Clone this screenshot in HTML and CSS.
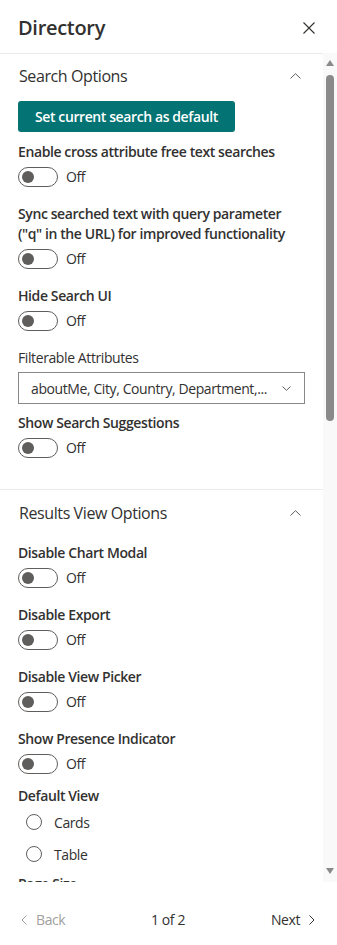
FILE: index.html
```html
<!DOCTYPE html>
<html lang="en">
<head>
<meta charset="utf-8">
<title>Directory</title>
<link rel="stylesheet" href="styles.css">
</head>
<body>
<div class="panel">
  <header class="head">
    <h1 class="title">Directory</h1>
    <button class="close" aria-label="Close">
      <svg width="12" height="12" viewBox="0 0 12 12"><path d="M0.5 0.5 L11.5 11.5 M11.5 0.5 L0.5 11.5" stroke="#323130" stroke-width="1.1" fill="none"/></svg>
    </button>
  </header>
  <div class="body">
    <div class="scroll">
      <section class="group">
        <div class="group-head">
          <span class="group-title">Search Options</span>
          <svg class="chev-up" width="11" height="6" viewBox="0 0 11 6"><path d="M0.5 5.5 L5.5 0.7 L10.5 5.5" stroke="#605e5c" stroke-width="1" fill="none"/></svg>
        </div>
        <div class="group-body">
          <button class="primary">Set current search as default</button>
          <div class="field first">
            <div class="label">Enable cross attribute free text searches</div>
            <div class="toggle-row"><span class="toggle"><span class="knob"></span></span><span class="state">Off</span></div>
          </div>
          <div class="field">
            <div class="label">Sync searched text with query parameter ("q" in the URL) for improved functionality</div>
            <div class="toggle-row"><span class="toggle"><span class="knob"></span></span><span class="state">Off</span></div>
          </div>
          <div class="field">
            <div class="label">Hide Search UI</div>
            <div class="toggle-row"><span class="toggle"><span class="knob"></span></span><span class="state">Off</span></div>
          </div>
          <div class="field">
            <div class="label plain">Filterable Attributes</div>
            <div class="dropdown">
              <span class="dd-text">aboutMe, City, Country, Department,...</span>
              <svg class="dd-chev" width="9" height="5" viewBox="0 0 9 5"><path d="M0.5 0.5 L4.5 4.3 L8.5 0.5" stroke="#605e5c" stroke-width="1" fill="none"/></svg>
            </div>
          </div>
          <div class="field after-dd">
            <div class="label">Show Search Suggestions</div>
            <div class="toggle-row"><span class="toggle"><span class="knob"></span></span><span class="state">Off</span></div>
          </div>
        </div>
      </section>
      <section class="group second">
        <div class="group-head">
          <span class="group-title">Results View Options</span>
          <svg class="chev-up" width="11" height="6" viewBox="0 0 11 6"><path d="M0.5 5.5 L5.5 0.7 L10.5 5.5" stroke="#605e5c" stroke-width="1" fill="none"/></svg>
        </div>
        <div class="group-body">
          <div class="field first2">
            <div class="label">Disable Chart Modal</div>
            <div class="toggle-row"><span class="toggle"><span class="knob"></span></span><span class="state">Off</span></div>
          </div>
          <div class="field">
            <div class="label">Disable Export</div>
            <div class="toggle-row"><span class="toggle"><span class="knob"></span></span><span class="state">Off</span></div>
          </div>
          <div class="field">
            <div class="label">Disable View Picker</div>
            <div class="toggle-row"><span class="toggle"><span class="knob"></span></span><span class="state">Off</span></div>
          </div>
          <div class="field">
            <div class="label">Show Presence Indicator</div>
            <div class="toggle-row"><span class="toggle"><span class="knob"></span></span><span class="state">Off</span></div>
          </div>
          <div class="field tight">
            <div class="label">Default View</div>
            <div class="radios">
              <div class="radio"><span class="circle"></span><span>Cards</span></div>
              <div class="radio"><span class="circle"></span><span>Table</span></div>
            </div>
          </div>
          <div class="field page">
            <div class="label">Page Size</div>
          </div>
        </div>
      </section>
    </div>
    <div class="sbar">
      <span class="arrow up"></span>
      <div class="track"><div class="thumb"></div></div>
      <span class="arrow down"></span>
    </div>
  </div>
  <footer class="foot">
    <span class="back">
      <svg width="6" height="10" viewBox="0 0 6 10"><path d="M5.5 0.5 L1 5 L5.5 9.5" stroke="#a19f9d" stroke-width="1" fill="none"/></svg>
      Back
    </span>
    <span class="pages">1 of 2</span>
    <span class="next">
      Next
      <svg width="6" height="10" viewBox="0 0 6 10"><path d="M0.5 0.5 L5 5 L0.5 9.5" stroke="#323130" stroke-width="1" fill="none"/></svg>
    </span>
  </footer>
</div>
</body>
</html>
```
FILE: styles.css
```css
* { box-sizing: border-box; }
html, body { margin: 0; padding: 0; background: #fff; }
body {
  font-family: "Segoe UI", "Open Sans", "Noto Sans", sans-serif;
  color: #323130;
  font-size: 14px;
  letter-spacing: -0.4px;
}
.panel {
  width: 337px;
  height: 945px;
  display: flex;
  flex-direction: column;
  overflow: hidden;
}
.head {
  height: 53px;
  flex: none;
  display: flex;
  align-items: center;
  justify-content: space-between;
  padding: 3px 22px 0 18px;
}
.title {
  margin: 0;
  font-size: 20px;
  font-weight: 600;
  line-height: 28px;
  letter-spacing: -0.3px;
}
.close {
  border: 0;
  background: none;
  padding: 0;
  width: 12px;
  height: 12px;
  display: flex;
}
.body {
  flex: 1;
  display: flex;
  min-height: 0;
}
.scroll {
  flex: 1;
  overflow: hidden;
  border-top: 1px solid #edebe9;
}
.sbar {
  width: 14px;
  flex: none;
  background: #f9f9f9;
  display: flex;
  flex-direction: column;
  align-items: center;
  padding: 7px 0 8px;
}
.arrow {
  width: 0;
  height: 0;
  border-left: 4px solid transparent;
  border-right: 4px solid transparent;
  flex: none;
}
.arrow.up { border-bottom: 6px solid #8a8a8a; }
.arrow.down { border-top: 6px solid #8a8a8a; }
.track {
  flex: 1;
  width: 100%;
  display: flex;
  justify-content: center;
  padding-top: 9px;
}
.thumb {
  width: 8px;
  height: 346px;
  background: #8a8a8a;
  border-radius: 4px;
}
.group-head {
  display: flex;
  align-items: center;
  justify-content: space-between;
  padding: 11px 22px 14px 19px;
}
.group-title {
  font-size: 16px;
  line-height: 22px;
}
.group-body {
  padding: 0 18px;
}
.second {
  border-top: 1px solid #edebe9;
  margin-top: 31px;
}
.second .group-head { padding-top: 12px; }
.primary {
  display: inline-flex;
  align-items: center;
  height: 31px;
  padding: 0 17px;
  border: 0;
  border-radius: 3px;
  background: #037373;
  color: #fff;
  font-family: inherit;
  font-size: 14px;
  font-weight: 600;
  letter-spacing: -0.4px;
}
.field { margin-top: 17px; }
.field.first { margin-top: 10px; }
.field.first2 { margin-top: 5px; }
.field.after-dd { margin-top: 9px; }
.field.tight { margin-top: 12px; }
.field.page { margin-top: 4px; }
.label {
  font-weight: 600;
  line-height: 20px;
}
.label.plain { font-weight: 400; }
.toggle-row {
  margin-top: 5px;
  display: flex;
  align-items: center;
  gap: 8px;
  height: 20px;
}
.toggle {
  width: 40px;
  height: 20px;
  border: 1px solid #605e5c;
  border-radius: 10px;
  display: flex;
  align-items: center;
  padding: 0 3px;
}
.knob {
  width: 12px;
  height: 12px;
  border-radius: 50%;
  background: #605e5c;
}
.state { line-height: 20px; }
.dropdown {
  margin-top: 4px;
  height: 32px;
  border: 1px solid #8a8886;
  display: flex;
  align-items: center;
  padding: 0 13px 0 12px;
  gap: 10px;
}
.dd-text {
  flex: 1;
  min-width: 0;
  white-space: nowrap;
  overflow: hidden;
  text-overflow: ellipsis;
}
.dd-chev { flex: none; }
.radios { display: flex; flex-direction: column; }
.radio {
  height: 32px;
  display: flex;
  align-items: center;
  padding-left: 8px;
  gap: 12px;
}
.circle {
  width: 16px;
  height: 16px;
  border: 1px solid #605e5c;
  border-radius: 50%;
  flex: none;
}
.foot {
  height: 63px;
  flex: none;
  display: grid;
  grid-template-columns: 1fr auto 1fr;
  align-items: start;
  padding: 28px 22px 0 21px;
  line-height: 20px;
}
.back {
  color: #a19f9d;
  display: flex;
  align-items: center;
  gap: 9px;
}
.pages { text-align: center; }
.next {
  justify-self: end;
  display: flex;
  align-items: center;
  gap: 9px;
}
```
